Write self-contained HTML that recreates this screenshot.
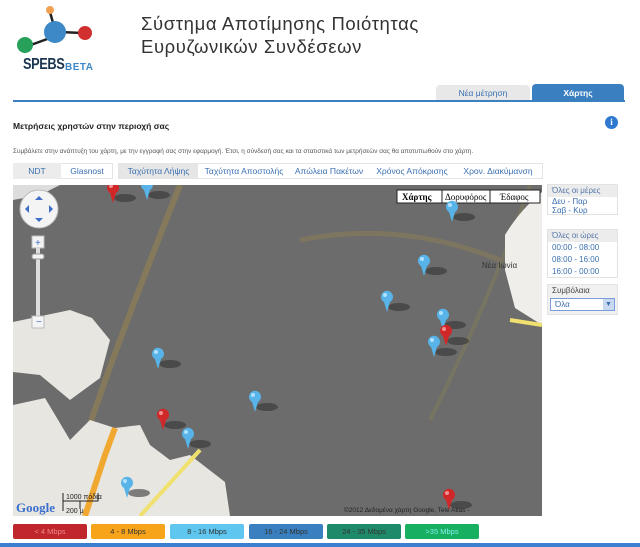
<!DOCTYPE html>
<html><head><meta charset="utf-8"><style>
*{margin:0;padding:0;box-sizing:border-box}
body{width:640px;height:547px;background:#fff;font-family:"Liberation Sans","DejaVu Sans",sans-serif;position:relative;overflow:hidden}
.a{position:absolute}
.title{left:141px;font-size:18.5px;color:#333;letter-spacing:0.6px;font-family:"Liberation Sans",sans-serif;white-space:nowrap}
.ft{position:absolute;top:163px;height:16px;font-size:8.5px;color:#3a6fb0;line-height:16px;text-align:center}
.box{position:absolute;left:547px;width:71px;border:1px solid #e2e2e2;font-size:8px;color:#3a6fb0}
.box div{height:12px;line-height:12px;padding-left:4px}
.box .h{background:#ececec;color:#5577aa}
.lg{position:absolute;top:524px;height:15px;width:74px;font-size:7.5px;line-height:15px;text-align:center;color:#333;border-radius:2px}
</style></head><body>
<svg class="a" style="left:0;top:0" width="100" height="60">
<line x1="50" y1="12" x2="55" y2="30" stroke="#222" stroke-width="2.5"/>
<line x1="60" y1="32" x2="82" y2="33" stroke="#222" stroke-width="2.5"/>
<line x1="50" y1="38" x2="28" y2="46" stroke="#222" stroke-width="2.5"/>
<circle cx="50" cy="10" r="4" fill="#f0a050"/>
<circle cx="55" cy="32" r="11" fill="#3d88c7"/>
<circle cx="85" cy="33" r="7" fill="#d03030"/>
<circle cx="25" cy="45" r="8" fill="#27a05a"/>
</svg>
<div class="a" style="left:23px;top:56px;font-size:16px;color:#1b3550;font-weight:bold;letter-spacing:-0.5px;transform:scaleX(0.8);transform-origin:left">SPEBS</div>
<div class="a" style="left:65px;top:62px;font-size:10px;color:#3d88c7;font-weight:bold;letter-spacing:0.5px">BETA</div>
<div class="a title" style="top:13px">Σύστημα Αποτίμησης Ποιότητας</div>
<div class="a title" style="top:36px">Ευρυζωνικών Συνδέσεων</div>
<div class="a" style="left:436px;top:85px;width:94px;height:16px;background:#e8e8e8;border-radius:4px 4px 0 0;font-size:8.5px;color:#3a6fb0;text-align:center;line-height:17px">Νέα μέτρηση</div>
<div class="a" style="left:532px;top:84px;width:92px;height:17px;background:#3a7fc0;border-radius:4px 4px 0 0;font-size:8.5px;color:#fff;font-weight:bold;text-align:center;line-height:19px">Χάρτης</div>
<div class="a" style="left:13px;top:100px;width:612px;height:2px;background:#3a7fc0"></div>
<div class="a" style="left:13px;top:121px;font-size:8.5px;font-weight:bold;color:#222">Μετρήσεις χρηστών στην περιοχή σας</div>
<div class="a" style="left:605px;top:116px;width:13px;height:13px;border-radius:50%;background:#2f7ad0;color:#fff;font-size:9px;font-weight:bold;text-align:center;line-height:13px;font-family:'Liberation Serif',serif">i</div>
<div class="a" style="left:13px;top:148px;font-size:6.4px;color:#555;white-space:nowrap">Συμβάλετε στην ανάπτυξη του χάρτη, με την εγγραφή σας στην εφαρμογή. Έτσι, η σύνδεσή σας και τα στατιστικά των μετρήσεών σας θα αποτυπωθούν στο χάρτη.</div>
<div class="a" style="left:13px;top:163px;width:100px;height:16px;border:1px solid #e4e4e4"></div>
<div class="ft" style="left:13px;width:48px;background:#ececec">NDT</div>
<div class="ft" style="left:61px;width:52px">Glasnost</div>
<div class="a" style="left:118px;top:163px;width:425px;height:16px;border:1px solid #e4e4e4"></div>
<div class="ft" style="left:119px;width:79px;background:#e6e6e6">Ταχύτητα Λήψης</div>
<div class="ft" style="left:200px;width:88px">Ταχύτητα Αποστολής</div>
<div class="ft" style="left:290px;width:78px">Απώλεια Πακέτων</div>
<div class="ft" style="left:372px;width:80px">Χρόνος Απόκρισης</div>
<div class="ft" style="left:455px;width:86px">Χρον. Διακύμανση</div>
<svg class="a" style="left:13px;top:185px" width="529" height="331" viewBox="13 185 529 331">
<rect x="13" y="185" width="529" height="331" fill="#6c6c6c"/>
<path d="M13 185 L60 185 L40 195 L13 200Z" fill="#ddd"/>
<path d="M180 185 Q150 260 120 340 Q90 420 60 516" stroke="#85795c" stroke-width="6" fill="none"/>
<path d="M300 240 Q400 220 500 260" stroke="#7d7560" stroke-width="5" fill="none"/>
<path d="M530 185 Q490 300 430 420" stroke="#787462" stroke-width="4" fill="none"/>
<path d="M13 322 L70 310 L92 318 L110 340 L100 378 L70 400 L40 375 L13 372Z" fill="#e8e6e0"/>
<path d="M13 405 L45 398 L70 440 L90 420 L115 428 L140 425 L150 445 L170 460 L190 455 L225 482 L230 516 L13 516Z" fill="#e8e6e0"/>
<path d="M85 516 L105 455 L115 428" stroke="#f0a830" stroke-width="6" fill="none"/>
<path d="M140 516 L200 450" stroke="#f0e070" stroke-width="4" fill="none"/>
<path d="M505 235 Q520 210 542 192 L542 325 L515 308 L505 270Z" fill="#f0eeea"/>
<path d="M510 320 L542 325" stroke="#f0e070" stroke-width="4"/>
<rect x="20" y="190" width="38" height="38" rx="19" fill="#f4f4f4" stroke="#bbb"/>
<path d="M39 196 l-4 4 h8z M39 222 l-4 -4 h8z M25 209 l4 -4 v8z M53 209 l-4 -4 v8z" fill="#3f6fc8"/>
<rect x="32" y="236" width="12" height="12" fill="#f4f4f4" stroke="#bbb"/>
<text x="35" y="246" font-size="10" fill="#3f6fc8">+</text>
<rect x="36" y="248" width="4" height="68" fill="#ddd"/>
<rect x="32" y="254" width="12" height="5" rx="2" fill="#f4f4f4" stroke="#999"/>
<rect x="32" y="316" width="12" height="12" fill="#f4f4f4" stroke="#bbb"/>
<text x="36" y="325" font-size="10" fill="#3f6fc8">−</text>
<g font-family="Liberation Serif,serif" font-size="9">
<rect x="397" y="190" width="143" height="13" fill="#fff" stroke="#222"/>
<line x1="442" y1="190" x2="442" y2="203" stroke="#222"/><line x1="490" y1="190" x2="490" y2="203" stroke="#222"/>
<text x="402" y="200" font-weight="bold">Χάρτης</text><text x="445" y="200">Δορυφόρος</text><text x="500" y="200">Έδαφος</text>
</g>
<text x="482" y="268" font-size="8" fill="#333">Νέα Ιωνία</text>
<text x="16" y="512" font-size="13" font-weight="bold" fill="#3a6fcf" font-family="Liberation Serif,serif">Google</text>
<path d="M63 493 v8 h35 v-8 M63 501 v10 M80 501 v8" stroke="#222" fill="none"/>
<text x="66" y="499" font-size="7" fill="#222">1000 πόδια</text><text x="66" y="513" font-size="7" fill="#222">200 μ</text>
<text x="344" y="512" font-size="6.5" fill="#222">©2012 Δεδομένα χάρτη Google, Tele Atlas -</text>
<g id="pins">
<defs>
<g id="pb"><ellipse cx="12" cy="-5" rx="11" ry="4" fill="#333" opacity="0.6"/><path d="M0 0 L-3 -10 A6 6 0 1 1 3 -10Z" fill="#58b4e8"/><circle cx="-2" cy="-17" r="2" fill="#b0e0ff"/></g>
<g id="pr"><ellipse cx="12" cy="-5" rx="11" ry="4" fill="#333" opacity="0.6"/><path d="M0 0 L-3 -10 A6 6 0 1 1 3 -10Z" fill="#d02828"/><circle cx="-2" cy="-17" r="2" fill="#f09090"/></g>
</defs>
<use href="#pr" x="113" y="203"/><use href="#pb" x="147" y="200"/>
<use href="#pb" x="452" y="222"/><use href="#pb" x="424" y="276"/><use href="#pb" x="387" y="312"/>
<use href="#pb" x="443" y="330"/><use href="#pr" x="446" y="346"/><use href="#pb" x="434" y="357"/>
<use href="#pb" x="158" y="369"/><use href="#pb" x="255" y="412"/><use href="#pr" x="163" y="430"/>
<use href="#pb" x="188" y="449"/><use href="#pb" x="127" y="498"/><use href="#pr" x="449" y="510"/>
</g>
</svg>
<div class="box" style="top:184px;height:31px"><div class="h">Όλες οι μέρες</div><div style="height:9px;line-height:9px">Δευ - Παρ</div><div style="height:9px;line-height:9px">Σαβ - Κυρ</div></div>
<div class="box" style="top:229px;height:49px"><div class="h">Όλες οι ώρες</div><div>00:00 - 08:00</div><div>08:00 - 16:00</div><div>16:00 - 00:00</div></div>
<div class="box" style="top:284px;height:31px;background:#f1f1f1;color:#444"><div style="color:#444">Συμβόλαια</div>
<div style="margin:1px 2px;background:#fff;border:1px solid #7a9cd8;height:13px;line-height:11px;color:#3a6fb0;position:relative">Όλα<span style="position:absolute;right:0;top:0;width:11px;height:11px;background:#c8d8f0;font-size:7px;text-align:center;padding:0">▼</span></div></div>
<div class="lg" style="left:13px;background:#c0272d;color:#e88">&lt; 4 Mbps</div>
<div class="lg" style="left:91px;background:#f8a41a">4 - 8 Mbps</div>
<div class="lg" style="left:170px;background:#5fc6ef">8 - 16 Mbps</div>
<div class="lg" style="left:249px;background:#3a80c0">16 - 24 Mbps</div>
<div class="lg" style="left:327px;background:#1e8a6a">24 - 35 Mbps</div>
<div class="lg" style="left:405px;background:#16b060;color:#8ee">&gt;35 Mbps</div>
<div class="a" style="left:0;top:543px;width:640px;height:4px;background:#3a7fd0"></div>
</body></html>
